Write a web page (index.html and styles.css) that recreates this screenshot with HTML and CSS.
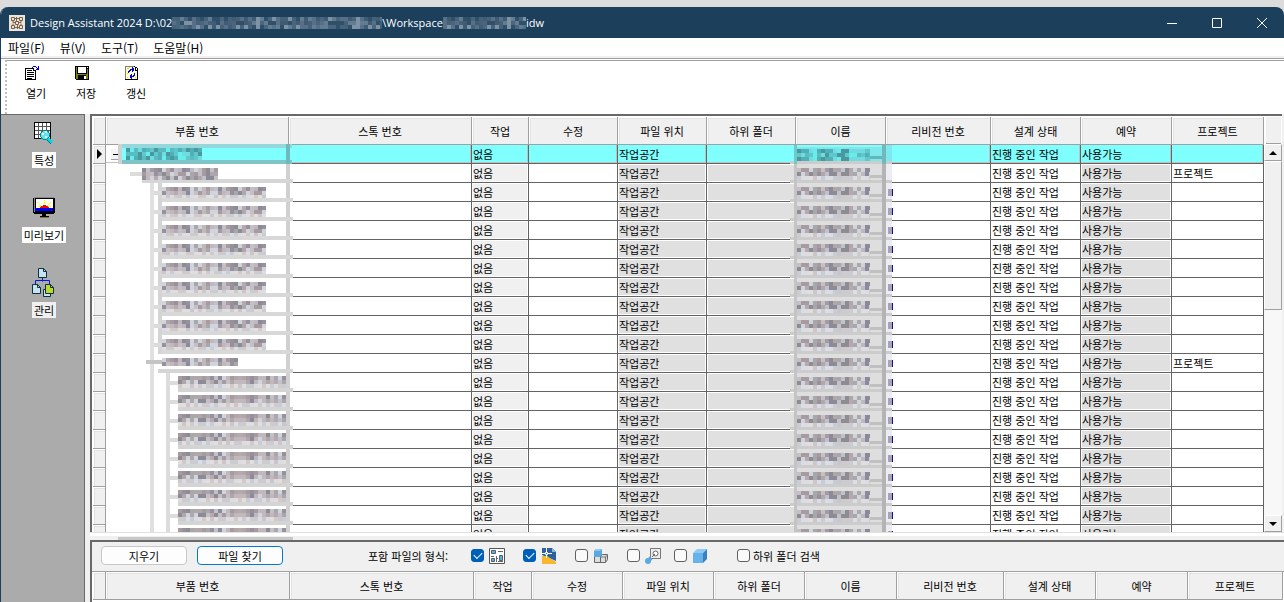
FILE: index.html
```html
<!DOCTYPE html>
<html lang="ko">
<head>
  <meta charset="UTF-8" />
  <meta name="viewport" content="width=device-width, initial-scale=1.0"/>
  <title>Design Assistant 2024</title>
  <link rel="stylesheet" href="styles.css">
</head>
<body>
  <div class="window">
    <header class="titlebar">
      <svg class="app-icon" width="16" height="16" viewBox="0 0 16 16">
        <rect width="16" height="16" fill="#e9e5de"/>
        <g fill="none" stroke="#7b6141">
          <path d="M2.500 2.500h3v3h-3zM10.500 2.500h3v3h-3zM2.500 10.500h3v3h-3zM10.500 10.500h3v3h-3zM6.500 6.500h3v3h-3z"/>
          <path d="M4 5.500v2h2.500M12 5.500v2H9.500M4 10.500v-2M12 10.500v-2M7.500 2v4.500M8.500 9.500V14M6 3.500h4M6 12.500h4"/>
        </g>
      </svg>
      <div class="title">
        <span>Design Assistant 2024 D:\02</span>
        <svg class="mosaic" data-width="210" data-seed="3"></svg>
        <span>\Workspace</span>
        <svg class="mosaic" data-width="83" data-seed="8"></svg>
        <span>idw</span>
      </div>
      <div class="window-buttons">
        <button aria-label="최소화"><svg width="12" height="12"><path d="M1 6.500h10"/></svg></button>
        <button aria-label="최대화"><svg width="12" height="12"><path d="M1.500 1.500h9v9h-9z"/></svg></button>
        <button aria-label="닫기"><svg width="12" height="12"><path d="M1 1l10 10M11 1L1 11"/></svg></button>
      </div>
    </header>

    <nav class="menubar">
      <button>파일(F)</button>
      <button>뷰(V)</button>
      <button>도구(T)</button>
      <button>도움말(H)</button>
    </nav>

    <div class="toolbar">
      <button class="tool">
        <svg width="16" height="16" viewBox="0 0 16 16" shape-rendering="crispEdges">
          <path d="M1 3h9v2h2v10H1z" fill="#000"/>
          <path d="M2 4h7v2h2v8H2z" fill="#fff"/>
          <path d="M3 5.500h5M3 7.500h7M3 9.500h7M3 11.500h7M3 13h5" stroke="#000"/>
          <path d="M8 2.500h1M9 1.500h3M12 2.500h1M13 3.500h2M14.500 1v4M12 4.500h3" stroke="#0000ee" fill="none"/>
        </svg>
        <span>열기</span>
      </button>
      <button class="tool">
        <svg width="16" height="16" viewBox="0 0 16 16" shape-rendering="crispEdges">
          <path d="M1 1h14v14H2l-1-1z" fill="#000"/>
          <path d="M2 2h1v12H2zM13 4h1v10h-1zM3 9h10v1H3zM3 10h1v4H3zM12 10h1v4h-1z" fill="#808000"/>
          <path d="M4 2h8v6H4zM13 2h1v1h-1z" fill="#fff"/>
          <path d="M10 11h2v3h-2z" fill="#fff"/>
        </svg>
        <span>저장</span>
      </button>
      <button class="tool">
        <svg width="16" height="16" viewBox="0 0 16 16" shape-rendering="crispEdges">
          <path d="M1 1h10l3 3v11H1z" fill="#ffffcc"/>
          <path d="M1.500 15V1.500H10" fill="none" stroke="#808080"/>
          <path d="M10 1.500h1M11.500 2v3H14M12 2.500h1M13.500 3v12M1 14.500h13" fill="none" stroke="#000"/>
          <path d="M3 3h2v1H3zM3 12h1v1H3zM11 12h1v1h-1zM5 2h1v1H5zM3 8h1v1H3z" fill="#e8d800"/>
          <path d="M4.500 8V6.500h1V5.500h1V4.500H9M8.500 2v5M9.500 3v3M10.500 8v2.500h-1v1H7M7.500 9v5M6.500 10v3" fill="none" stroke="#0000ee"/>
        </svg>
        <span>갱신</span>
      </button>
    </div>

    <div class="workspace">
      <aside class="sidebar">
        <button class="side-item">
          <svg width="30" height="30" viewBox="0 0 30 30" shape-rendering="crispEdges">
            <path d="M5 4h17v17H5z" fill="#000"/>
            <path d="M6 5h15v15H6z" fill="#fff"/>
            <path d="M9.500 5v15M13.500 5v15M17.500 5v15M6 8.500h15M6 12.500h15M6 16.500h15" stroke="#555"/>
            <circle cx="16" cy="17" r="4.500" fill="#5ce8ef" stroke="#008b98"/>
            <path d="M13 15h2v2h-2zM16 13h2v2h-2zM16 18h2v2h-2z" fill="#fff"/>
            <path d="M19 21l4 4" stroke="#00d8e8" stroke-width="3"/>
            <path d="M18 22l4 4" stroke="#007080"/>
          </svg>
          <span>특성</span>
        </button>
        <button class="side-item">
          <svg width="30" height="30" viewBox="0 0 30 30" shape-rendering="crispEdges">
            <path d="M5 4h20v1h1v15h-1v1H5v-1H4V5h1z" fill="#000"/>
            <path d="M5 4h20v1H5zM5 5h1v14H5z" fill="#888"/>
            <path d="M7 6h17v9H7z" fill="#fff"/>
            <path d="M6 15h18v3H6z" fill="#0000ff"/>
            <path d="M15.500 7v4M8 9l4 4M22 9l-4 4M9 13.500h3M19 13.500h3" stroke="#ffff00"/>
            <path d="M11 15v-1h1v-1h2v-1h3v1h2v1h1v1z" fill="#ff0000"/>
            <path d="M13 21h4v2h3v1H11v-1h2z" fill="#000"/>
            <path d="M11 24h9v1h-9z" fill="#808000"/>
          </svg>
          <span>미리보기</span>
        </button>
        <button class="side-item">
          <svg width="30" height="30" viewBox="0 0 30 30">
            <path d="M13.500 9.500v4M6.500 17v-4.500h14V17" fill="none" stroke="#0018e0"/>
            <g stroke="#10303c" stroke-linejoin="miter">
              <path d="M9.500.500h5l3 3v6h-8z" fill="#c5e3f0"/>
              <path d="M3.500 16.500h5l3 3v6h-8z" fill="#c5e3f0"/>
              <path d="M14.500 21.500h7v7h-7z" fill="#c5e3f0"/>
              <path d="M16.500 16.500h5l3 3v6h-8z" fill="#bada2e"/>
              <path d="M14.500.500v3h3M8.500 16.500v3h3M21.500 16.500v3h3" fill="none"/>
            </g>
          </svg>
          <span class="selected">관리</span>
        </button>
      </aside>

      <main class="content">
        <section class="grid-pane">
          <div class="grid-view">
            <table class="grid">
              <colgroup>
                <col class="c-mark"><col class="c-part"><col class="c-part"><col class="c-action"><col class="c-std"><col class="c-std"><col class="c-std"><col class="c-name"><col class="c-rev"><col class="c-name"><col class="c-reserve"><col>
              </colgroup>
              <thead>
                <tr>
                  <th></th><th>부품 번호</th><th>스톡 번호</th><th>작업</th><th>수정</th><th>파일 위치</th><th>하위 폴더</th><th>이름</th><th>리비전 번호</th><th>설계 상태</th><th>예약</th><th>프로젝트</th>
                </tr>
              </thead>
              <tbody id="fileRows"></tbody>
            </table>
          </div>
          <div class="scrollbar">
            <div class="scroll-corner"></div>
            <button aria-label="위로"><svg width="8" height="4"><path d="M0 4l4-4 4 4z"/></svg></button>
            <div class="scroll-track"><div class="scroll-thumb"></div></div>
            <button aria-label="아래로"><svg width="8" height="4"><path d="M0 0l4 4 4-4z"/></svg></button>
          </div>
        </section>

        <div class="splitter"><div class="splitter-handle"></div></div>

        <section class="find-pane">
          <div class="find-bar">
            <div class="find-buttons">
              <button class="btn">지우기</button>
              <button class="btn btn-default">파일 찾기</button>
            </div>
            <span class="find-label">포함 파일의 형식:</span>
            <div class="file-types">
              <label><input type="checkbox" aria-label="도면" checked>
                <svg width="16" height="16" viewBox="0 0 16 16">
                  <path d="M.500.500h15v15H.500z" fill="#fff" stroke="#555"/>
                  <g fill="#58b0e4" stroke="#55606a"><path d="M2.500 2.500h4v3h-4zM2.500 10.500h3v3h-3zM10.500 7.500h3v5h-3z"/></g>
                  <path d="M9 3.500h5M2 8.500h3M7.500 8v6M9 13.500h5M7 10.500h2" stroke="#666"/>
                </svg>
              </label>
              <label><input type="checkbox" aria-label="DWG" checked>
                <svg width="16" height="16" viewBox="0 0 16 16">
                  <path d="M1 0h10l4 4v9L1 7z" fill="#2c62a2"/>
                  <path d="M11 0v4h4z" fill="#8eb5dc"/>
                  <path d="M1 8l5 0 9 6v2H1z" fill="#f8b82c"/>
                  <path d="M5.500 0v10M0 5.500h11" stroke="#fff"/>
                  <path d="M4.500 4.500h2v2h-2z" fill="#2c62a2" stroke="#fff"/>
                </svg>
              </label>
              <label><input type="checkbox" aria-label="조립품">
                <svg width="16" height="16" viewBox="0 0 16 16">
                  <path d="M1.500 8.500h6v6h-6zM7.500 8.500l2-2h5v5l-2 3h-5z" fill="#ddd" stroke="#666"/>
                  <path d="M7.500 9h5v5.500M12.500 9l2-2" fill="none" stroke="#777"/>
                  <path d="M1 3l2-2h6v6L7 9H1z" fill="#5aa8e2"/>
                  <path d="M1 3l2-2h6L7 3z" fill="#8bcaf2"/>
                </svg>
              </label>
              <label><input type="checkbox" aria-label="프리젠테이션">
                <svg width="16" height="16" viewBox="0 0 16 16">
                  <path d="M5.500.500h10v10h-10z" fill="#eee" stroke="#777"/>
                  <circle cx="10.500" cy="5.500" r="2.500" fill="#fff" stroke="#666"/>
                  <path d="M3 13l3-3" stroke="#5aa8e2" stroke-width="4"/>
                  <circle cx="3" cy="13" r="3" fill="#5aa8e2"/>
                  <path d="M7 9l3-3" stroke="#666"/>
                </svg>
              </label>
            </div>
            <div class="file-types part-types">
              <label><input type="checkbox" aria-label="부품">
                <svg width="16" height="16" viewBox="0 0 16 16">
                  <path d="M1 5h10v10H1z" fill="#68b2ec"/>
                  <path d="M1 5l4-4h10l-4 4z" fill="#8acbf7"/>
                  <path d="M11 5l4-4v10l-4 4z" fill="#3681c1"/>
                </svg>
              </label>
              <label class="subfolder"><input type="checkbox">하위 폴더 검색</label>
            </div>
          </div>
          <table class="grid results">
            <colgroup>
              <col class="c-mark"><col class="r-part"><col class="r-part"><col class="r-action"><col class="r-std"><col class="r-std"><col class="r-std"><col class="r-name"><col class="r-rev"><col class="r-name"><col class="r-name"><col>
            </colgroup>
            <thead>
              <tr>
                <th></th><th>부품 번호</th><th>스톡 번호</th><th>작업</th><th>수정</th><th>파일 위치</th><th>하위 폴더</th><th>이름</th><th>리비전 번호</th><th>설계 상태</th><th>예약</th><th>프로젝트</th>
              </tr>
            </thead>
          </table>
        </section>
      </main>
    </div>
  </div>
  <script src="script.js"></script>
</body>
</html>
```

FILE: styles.css
```css
:root {
  --title: #1c3f5c;
  --face: #f0f0f0;
  --line: #a0a0a0;
  --dark-line: #646464;
  --readonly: #e0e0e0;
  --selected: #80ffff;
}
* {
  box-sizing: border-box;
}
body {
  margin: 0;
  height: 100vh;
  padding-top: 7px;
  overflow: hidden;
  background: #dcdcdc;
  color: #000;
  font-family: "Noto Sans CJK KR", sans-serif;
  font-size: 11px;
}
button {
  margin: 0;
  padding: 0;
  border: none;
  background: none;
  color: inherit;
  font: inherit;
}
svg {
  display: block;
  flex: none;
}
.window {
  display: flex;
  flex-direction: column;
  height: 100%;
  border-left: 1px solid var(--title);
  border-radius: 8px 8px 0 0;
  overflow: hidden;
  background: #fff;
}

/* title bar */
.titlebar {
  display: flex;
  align-items: center;
  flex: none;
  height: 31px;
  padding-left: 8px;
  background: var(--title);
  color: #fff;
}
.title {
  display: flex;
  align-items: center;
  flex: 1;
  margin-left: 5px;
  font: 11px/16px "Open Sans", "Noto Sans CJK KR", sans-serif;
  white-space: nowrap;
}
.window-buttons {
  display: flex;
}
.window-buttons button {
  display: flex;
  align-items: center;
  justify-content: center;
  width: 45px;
  height: 31px;
}
.window-buttons path {
  fill: none;
  stroke: #fff;
}

/* menu and toolbar */
.menubar {
  display: flex;
  flex: none;
  gap: 15px;
  height: 21px;
  padding-left: 7px;
  border-bottom: 1px solid var(--line);
  box-shadow: inset 0 -2px 0 var(--face);
  font-size: 12px;
  line-height: 18px;
}
.toolbar {
  display: flex;
  flex: none;
  height: 54px;
  margin: 1px 0 0 4px;
  border-top: 1px solid var(--line);
  border-left: 2px dotted #c0c0c0;
  padding: 4px 0 0 13px;
}
.tool {
  display: flex;
  flex-direction: column;
  align-items: flex-start;
  gap: 4px;
  width: 50px;
  height: 40px;
  padding-left: 4px;
}
.tool span {
  padding-left: 2px;
  line-height: 16px;
}

/* sidebar */
.workspace {
  display: flex;
  flex: 1;
  min-height: 0;
  background: var(--face);
}
.sidebar {
  display: flex;
  flex-direction: column;
  gap: 25px;
  flex: none;
  width: 84px;
  padding: 3px 0 0 3px;
  background: #ababab;
  border-top: 1px solid #696969;
  border-right: 1px solid #696969;
}
.side-item {
  display: flex;
  flex-direction: column;
  align-items: center;
  gap: 4px;
}
.side-item span {
  padding: 0 2px;
  background: #fff;
  line-height: 16px;
}
.side-item .selected {
  background: var(--face);
}

/* file grid */
.content {
  display: flex;
  flex-direction: column;
  flex: 1;
  min-width: 0;
  margin-left: 5px;
}
.grid-pane {
  display: flex;
  flex: 1;
  min-height: 0;
  margin-right: 2px;
  padding: 1px 0 0 1px;
  border-top: 2px solid #696969;
  border-left: 2px solid #696969;
  background: #fff;
}
.grid-view {
  flex: 1;
  min-width: 0;
  overflow: hidden;
}
.grid {
  width: 100%;
  table-layout: fixed;
  border-collapse: separate;
  border-spacing: 0;
}
.c-mark { width: 13px; }
.c-part { width: 183px; }
.c-action { width: 57px; }
.c-std { width: 89px; }
.c-name { width: 90px; }
.c-rev { width: 105px; }
.c-reserve { width: 91px; }
.r-part { width: 184px; }
.r-action { width: 58px; }
.r-std { width: 91px; }
.r-name { width: 92px; }
.r-rev { width: 107px; }
.grid th {
  height: 28px;
  padding: 0;
  border-right: 1px solid var(--line);
  border-bottom: 1px solid var(--line);
  background: var(--face);
  box-shadow: inset 1px 1px 0 #fff, inset 2px 2px 0 #e3e3e3;
  font-weight: normal;
  line-height: 16px;
}
.grid td {
  height: 19px;
  padding: 0 2px 0 1px;
  border-right: 1px solid var(--dark-line);
  border-bottom: 1px solid var(--dark-line);
  line-height: 18px;
  white-space: nowrap;
}
.grid .mark {
  padding: 0 4px;
  border-color: var(--line);
  background: var(--face);
  box-shadow: inset 1px 1px 0 #fff, inset 2px 2px 0 #e3e3e3;
}
.grid .tree {
  position: relative;
  border-bottom-color: transparent;
}
.grid .name {
  position: relative;
}
.tree svg,
.name svg {
  position: absolute;
  top: 0;
  overflow: visible;
}
.tree svg {
  left: 0;
}
.name svg {
  left: -6px;
}
.grid .action {
  background: var(--face);
  box-shadow: inset 0 0 0 1px #fff;
}
.grid .readonly {
  background: var(--readonly);
  box-shadow: inset 0 0 0 1px #fff;
}
.grid .current td:not(.mark) {
  background: var(--selected);
  box-shadow: inset 0 -1px 0 #c0c0c0, inset -1px 0 0 #c0c0c0;
}
.grid .current td.tree:not(.mark) {
  background: linear-gradient(to right, #fff 16px, var(--selected) 16px);
}

/* scroll bar */
.scrollbar {
  display: flex;
  flex-direction: column;
  flex: none;
  width: 18px;
}
.scroll-corner {
  height: 27px;
  margin: 0 1px 0 2px;
  background: var(--face);
  border-bottom: 1px solid var(--line);
}
.scrollbar button {
  display: flex;
  align-items: center;
  justify-content: center;
  flex: none;
  height: 17px;
}
.scrollbar button,
.scroll-thumb {
  background: var(--face);
  border: 1px solid #fff;
  border-right-color: var(--line);
  border-bottom-color: var(--line);
}
.scroll-track {
  flex: 1;
  background: #f8f8f8;
}
.scroll-thumb {
  height: 42%;
}
.splitter {
  flex: none;
  height: 8px;
  padding: 4px 0 0 28px;
  border-top: 1px solid #e0e0e0;
  background: linear-gradient(#fff 3px, var(--face) 3px);
}
.splitter-handle {
  width: 175px;
  height: 3px;
  background: #c8c8c8;
}

/* find files */
.find-pane {
  flex: none;
  height: 62px;
  border-top: 2px solid #696969;
  border-left: 2px solid #696969;
  background: #fff;
}
.find-bar {
  display: flex;
  align-items: center;
  height: 30px;
  padding: 0 0 2px 9px;
  border-bottom: 1px solid var(--line);
  background: var(--face);
  white-space: nowrap;
}
.find-buttons {
  display: flex;
  gap: 10px;
}
.btn {
  width: 86px;
  height: 19px;
  border: 1px solid #c8c8c8;
  border-radius: 4px;
  background: #fdfdfd;
  line-height: 16px;
}
.btn-default {
  border-color: #0078d4;
}
.find-label {
  width: 103px;
  margin-left: 85px;
  line-height: 16px;
}
.file-types {
  display: flex;
  gap: 18px;
}
.part-types {
  gap: 29px;
  margin-left: 13px;
}
.file-types label {
  display: flex;
  align-items: center;
  gap: 5px;
  line-height: 16px;
}
.file-types .subfolder {
  gap: 3px;
}
.file-types input {
  appearance: none;
  width: 13px;
  height: 13px;
  margin: 0;
  border: 1px solid #606060;
  border-radius: 3px;
  background: #fafafa;
}
.file-types input:checked {
  border-color: #005fb8;
  background: #005fb8;
}
.file-types input:checked::before {
  content: "";
  display: block;
  width: 7px;
  height: 4px;
  margin: 2px;
  border-left: 1px solid #fff;
  border-bottom: 1px solid #fff;
  transform: rotate(-45deg);
}
.results {
  width: calc(100% - 2px);
  margin-left: 1px;
}
```

FILE: script.js
```js
const CELL = 4;
const ROW_COUNT = 21;
const PROJECT_ROWS = [1, 11];

const titleColors = ['#3f5c74', '#466178', '#627d92', '#557088', '#324f69', '#7d93a5', '#4a667e'];
const textColors = ['#a89ba0', '#8a8a9c', '#c0b8bc', '#8c8c92', '#c4c0c8', '#b0a8a8', '#d0d4dc', '#98909c', '#b8a8b0', '#a8a8ac'];
const faintColors = ['#dcdce4', '#d0caca', '#c8ccd4', '#e2dede', '#ccc6cc'];
const cyanColors = ['#50b0b8', '#60c8cc', '#48989e', '#70dce0', '#58bcc0', '#68ecec'];

function rect(x, y, w, h, color) {
  return `<rect x="${x}" y="${y}" width="${w}" height="${h}" fill="${color}"/>`;
}

// repeatable pseudo random pick so that every row keeps its own pattern
function pick(list, n) {
  const v = Math.sin(n * 78.233 + 4) * 43758.5453;
  return list[Math.floor((v - Math.floor(v)) * list.length)];
}

function blocks(x, y, width, rows, colors, seed) {
  let out = '';
  for (let r = 0; r < rows; r++) {
    for (let c = 0; c * CELL < width; c++) {
      const w = Math.min(CELL, width - c * CELL);
      out += rect(x + c * CELL, y + r * CELL, w, CELL, pick(colors, seed + r * 61 + c));
    }
  }
  return out;
}

document.querySelectorAll('.mosaic').forEach(svg => {
  const width = Number(svg.dataset.width);
  svg.setAttribute('width', width);
  svg.setAttribute('height', 12);
  svg.innerHTML = blocks(0, 0, width, 3, titleColors, Number(svg.dataset.seed));
});

function treeSvg(i) {
  let out = '';
  if (i === 0) {
    out += rect(5, 4, 9, 11, '#f4f4f4') + rect(5, 14, 9, 1, '#a0a0a0') + rect(7, 9, 6, 1, '#000');
    out += rect(12, -1, 4, 20, '#d0d0d0');
    out += rect(16, -1, 170, 4, '#94d8dc') + rect(16, 15, 170, 4, '#80c4c8');
    out += blocks(20, 3, 76, 3, cyanColors, 5);
    out += rect(180, -1, 4, 20, '#70b8bc');
    return out;
  }
  out += rect(180, 0, 4, 19, '#d0d0d0');
  if (i === 1) {
    out += rect(24, 8, 12, 4, '#dcdcdc') + rect(36, 15, 151, 4, '#d6d6d6');
    return out + blocks(36, 4, 76, 3, textColors, 21);
  }
  out += rect(44, 0, 4, 19, '#e0e0e0');
  if (i < 11) {
    out += rect(52, 0, 4, 19, '#d4d4d4') + rect(48, 8, 8, 4, '#dcdcdc');
    out += blocks(56, 4, 104, 2, textColors, 7) + blocks(56, 12, 104, 1, faintColors, i);
    out += rect(56, 15, 131, 4, '#d8d8d8');
  } else if (i === 11) {
    out += rect(40, 6, 16, 4, '#c4c4c4') + rect(52, 15, 135, 4, '#d6d6d6');
    out += blocks(56, 4, 76, 2, textColors, 7);
  } else {
    out += rect(60, 0, 4, 19, '#dcdcdc') + rect(64, 8, 8, 4, '#dcdcdc');
    out += blocks(72, 3, 108, 2, textColors, 41) + blocks(72, 11, 108, 1, faintColors, i);
    out += rect(72, 15, 115, 4, '#d4d4d4');
  }
  return out;
}

function nameSvg(i) {
  const current = i === 0;
  let out = rect(4, current ? 2 : 0, 92, 19, current ? '#80e8ec' : '#dedede');
  out += rect(96, 0, 6, 19, current ? '#80e8ec' : '#ececf2');
  out += blocks(7, 4, 73, 2, current ? cyanColors : textColors, 90);
  out += blocks(7, 12, 73, 1, current ? cyanColors : faintColors, 90);
  out += rect(80, 11, 12, 3, current ? '#60b8bc' : '#c0c0c0');
  out += rect(0, 16, 102, 3, '#cccccc');
  out += rect(4, 0, 3, 19, current ? '#70c8cc' : '#c4c4c4') + rect(92, 0, 4, 19, current ? '#70b8bc' : '#b4b4b4');
  if (i > 1) {
    out += rect(98, 6, 4, 7, '#a8a4b8') + rect(102, 6, 1, 7, '#10108c');
  }
  return out;
}

const rows = [];
for (let i = 0; i < ROW_COUNT; i++) {
  rows.push(`
    <tr${i === 0 ? ' class="current"' : ''}>
      <td class="mark">${i === 0 ? '<svg width="5" height="10"><path d="M0 0l5 5-5 5z"/></svg>' : ''}</td>
      <td class="tree"><svg width="187" height="19" shape-rendering="crispEdges">${treeSvg(i)}</svg></td>
      <td></td>
      <td class="action">없음</td>
      <td></td>
      <td class="readonly">작업공간</td>
      <td class="readonly"></td>
      <td class="name"><svg width="103" height="19" shape-rendering="crispEdges">${nameSvg(i)}</svg></td>
      <td></td>
      <td>진행 중인 작업</td>
      <td class="readonly">사용가능</td>
      <td>${PROJECT_ROWS.includes(i) ? '프로젝트' : ''}</td>
    </tr>`);
}
document.getElementById('fileRows').innerHTML = rows.join('');
```
